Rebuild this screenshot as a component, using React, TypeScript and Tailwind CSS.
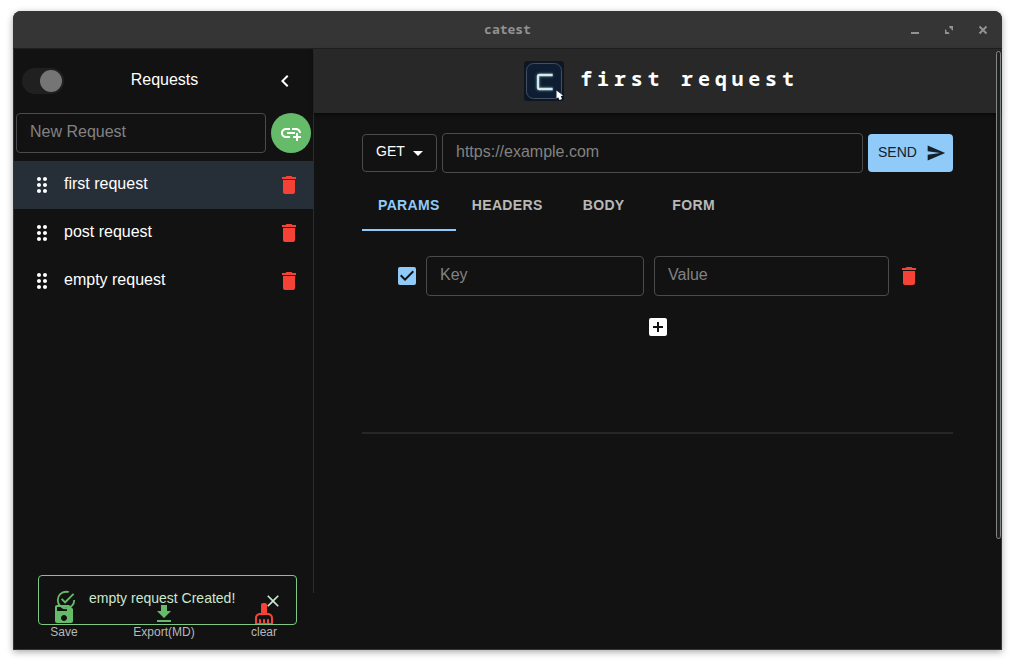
import { useState } from "react";
import {
  MdAddBox,
  MdAddLink,
  MdArrowDropDown,
  MdCheckBox,
  MdCheckBoxOutlineBlank,
  MdChevronLeft,
  MdCleaningServices,
  MdClose,
  MdDelete,
  MdDownload,
  MdDragIndicator,
  MdSave,
  MdSend,
} from "react-icons/md";

const initialRequests = ["first request", "post request", "empty request"];
const tabs = ["PARAMS", "HEADERS", "BODY", "FORM"];

const fieldClass =
  "h-10 min-w-0 rounded border border-[#4b4b4b] bg-transparent px-[13px] pb-0.5 text-base text-white outline-none placeholder:text-[#828282] focus:border-[#90caf9]";

function TitleBar() {
  return (
    <header className="relative flex h-[38px] shrink-0 items-center justify-center border-b border-[#202020] bg-[#353535] text-[#929292]">
      <h1 className="font-['Noto_Sans_Mono','DejaVu_Sans_Mono',monospace] text-[13px] font-bold">catest</h1>
      <div className="absolute right-3 flex gap-5">
        <button type="button" aria-label="Minimize">
          <svg viewBox="0 0 14 14" className="size-3.5" fill="currentColor">
            <path d="M3 9h8v2H3z" />
          </svg>
        </button>
        <button type="button" aria-label="Maximize">
          <svg viewBox="0 0 14 14" className="size-3.5" fill="currentColor">
            <path d="M7 3h4v4.5L9.5 7V5.500H8zM3 6l1.500 1.200V9H6.500L7.500 11H3z" />
          </svg>
        </button>
        <button type="button" aria-label="Close">
          <svg viewBox="0 0 14 14" className="size-3.5" fill="none" stroke="currentColor" strokeWidth="2">
            <path d="M3.5 3.5l7 7M10.5 3.5l-7 7" />
          </svg>
        </button>
      </div>
    </header>
  );
}

function Logo() {
  return (
    <svg viewBox="0 0 40 40" className="size-10" aria-hidden="true">
      <defs>
        <filter id="glow" x="-50%" y="-50%" width="200%" height="200%">
          <feGaussianBlur stdDeviation="1" />
        </filter>
      </defs>
      <rect width="40" height="40" rx="3" fill="#0d1623" />
      <rect x="2.5" y="2.5" width="35" height="35" rx="7" fill="#0f1d33" stroke="#434f63" />
      <path d="M28.700 14H15.500q-1.500 0-1.500 1.500v11q0 1.500 1.500 1.500H28.700" fill="none" stroke="#3f7482" strokeWidth="3.5" filter="url(#glow)" />
      <path d="M28.700 14H15.500q-1.500 0-1.500 1.500v11q0 1.500 1.500 1.500H28.700" fill="none" stroke="#dbe8ea" strokeWidth="2.3" />
      <path d="M32.500 29.500v7.700l1.700-1 1.300 2.800 2.500-1.100-1.200-2.700 2.200-.6z" fill="#fff" />
    </svg>
  );
}

function SuccessIcon() {
  return (
    <svg viewBox="0 0 24 24" className="size-[22px]" fill="currentColor" aria-hidden="true">
      <path d="M20,12A8,8 0 0,1 12,20A8,8 0 0,1 4,12A8,8 0 0,1 12,4C12.76,4 13.5,4.11 14.2,4.31L15.77,2.74C14.61,2.26 13.34,2 12,2A10,10 0 0,0 2,12A10,10 0 0,0 12,22A10,10 0 0,0 22,12M7.91,10.08L6.5,11.5L11,16L21,6L19.59,4.58L11,13.17L7.91,10.08Z" />
    </svg>
  );
}

function Sidebar() {
  const [selected, setSelected] = useState(0);
  const [requests, setRequests] = useState(initialRequests);
  const [toast, setToast] = useState(true);

  return (
    <aside className="relative flex w-[300px] shrink-0 flex-col">
      <div className="flex flex-1 flex-col border-r border-[#2c2c2c]">
        <div className="flex h-16 items-center pr-4 pl-2">
          <input
            type="checkbox"
            role="switch"
            aria-label="Dark theme"
            defaultChecked
            className="flex h-[26px] w-[42px] appearance-none items-center rounded-full bg-[#202020] px-0.5 before:size-[22px] before:rounded-full before:bg-[#757575] checked:justify-end"
          />
          <h2 className="flex-1 pr-2 pb-0.5 text-center text-base">Requests</h2>
          <button type="button" aria-label="Collapse sidebar">
            <MdChevronLeft className="size-6" />
          </button>
        </div>
        <form className="flex items-center gap-[5px] px-0.5" onSubmit={(e) => e.preventDefault()}>
          <input aria-label="New request" placeholder="New Request" className={`${fieldClass} flex-1`} />
          <button type="submit" aria-label="Add request" className="grid size-10 place-items-center rounded-full bg-[#66bb6a]">
            <MdAddLink className="size-6" />
          </button>
        </form>
        <ul className="pt-2">
          {requests.map((name, i) => (
            <li key={name} className={`flex h-12 items-center pr-3 pl-4 ${i === selected ? "bg-[#262e37]" : ""}`}>
              <MdDragIndicator className="size-6" />
              <button type="button" onClick={() => setSelected(i)} className="flex-1 pb-0.5 pl-2.5 text-left text-base">
                {name}
              </button>
              <button type="button" aria-label={`Delete ${name}`} onClick={() => setRequests(requests.filter((r) => r !== name))}>
                <MdDelete className="size-6 text-[#f44336]" />
              </button>
            </li>
          ))}
        </ul>
      </div>
      <nav className="grid h-14 grid-cols-3 text-xs text-[#b8b8b8]">
        <button type="button" className="flex flex-col items-center justify-center">
          <MdSave className="-mb-0.5 size-6 text-[#66bb6a]" />
          Save
        </button>
        <button type="button" className="flex flex-col items-center justify-center">
          <MdDownload className="-mb-0.5 size-6 text-[#66bb6a]" />
          Export(MD)
        </button>
        <button type="button" className="flex flex-col items-center justify-center">
          <MdCleaningServices className="-mb-0.5 size-6 text-[#f44336]" />
          clear
        </button>
      </nav>
      {toast && (
        <div
          role="alert"
          className="absolute bottom-6 left-6 flex h-[50px] w-[259px] items-center rounded border border-[#81c784] pr-[13px] pl-4 text-sm text-[#cce8cd]"
        >
          <span className="text-[#66bb6a]">
            <SuccessIcon />
          </span>
          <span className="flex-1 pb-1 pl-3 whitespace-nowrap">empty request Created!</span>
          <button type="button" aria-label="Dismiss" className="pt-0.5" onClick={() => setToast(false)}>
            <MdClose className="size-5" />
          </button>
        </div>
      )}
    </aside>
  );
}

function Workspace() {
  const [tab, setTab] = useState("PARAMS");

  return (
    <main className="relative min-w-0 flex-1">
      <header className="flex h-16 items-center justify-center gap-4 bg-[#282828] pl-2 shadow-[0_2px_4px_rgba(0,0,0,0.5)]">
        <Logo />
        <h2 className="pb-1 font-['Noto_Sans_Mono','DejaVu_Sans_Mono',monospace] text-xl font-bold tracking-[0.3rem]">
          first request
        </h2>
      </header>
      <div className="px-12 pt-5">
        <form className="flex items-center gap-[5px]" onSubmit={(e) => e.preventDefault()}>
          <div className="relative">
            <select
              aria-label="Method"
              className="h-[38px] w-[75px] appearance-none rounded border border-[#4b4b4b] bg-transparent pb-1 pl-[13px] text-sm text-white"
            >
              <option>GET</option>
              <option>POST</option>
              <option>PUT</option>
              <option>DELETE</option>
            </select>
            <MdArrowDropDown className="pointer-events-none absolute top-[7px] right-[7px] size-6" />
          </div>
          <input aria-label="URL" placeholder="https://example.com" className={`${fieldClass} flex-1`} />
          <button
            type="submit"
            className="flex h-[38px] w-[85px] items-center justify-between rounded bg-[#90caf9] pr-[7px] pl-2.5 text-sm text-[#14202a]"
          >
            <span className="pb-0.5">SEND</span>
            <MdSend className="size-5" />
          </button>
        </form>
        <div role="tablist" className="mt-2 flex">
          {tabs.map((name) => (
            <button
              key={name}
              type="button"
              role="tab"
              aria-selected={tab === name}
              onClick={() => setTab(name)}
              className={`h-[50px] min-w-[90px] border-b-2 px-4 text-sm font-bold tracking-wide ${
                tab === name ? "border-[#90caf9] text-[#90caf9]" : "border-transparent text-[#b8b8b8]"
              }`}
            >
              {name}
            </button>
          ))}
        </div>
        <div className="flex h-[203px] flex-col items-center border-b-2 border-[#262626] pt-[25px]">
          <div className="flex w-full items-center pr-8 pl-[33px]">
            <span className="relative mr-[7px] size-6 shrink-0 text-[#90caf9]">
              <input type="checkbox" aria-label="Enabled" defaultChecked className="peer absolute inset-0 size-6 appearance-none" />
              <MdCheckBox className="pointer-events-none hidden size-6 peer-checked:block" />
              <MdCheckBoxOutlineBlank className="pointer-events-none size-6 peer-checked:hidden" />
            </span>
            <input aria-label="Key" placeholder="Key" className={`${fieldClass} mr-2.5 flex-[190]`} />
            <input aria-label="Value" placeholder="Value" className={`${fieldClass} mr-2 flex-[207]`} />
            <button type="button" aria-label="Delete parameter">
              <MdDelete className="size-6 text-[#f44336]" />
            </button>
          </div>
          <button type="button" aria-label="Add parameter" className="mt-[19px]">
            <MdAddBox className="size-6" />
          </button>
        </div>
      </div>
      <div className="absolute top-0.5 right-0 bottom-[110px] w-[5px] rounded-sm border border-[#858585] bg-[#1c2222]" />
    </main>
  );
}

export default function App() {
  return (
    <div className="flex h-screen min-h-[560px] flex-col bg-white px-[13px] pt-[11px] pb-4 font-['Liberation_Sans',Arial,sans-serif] text-white">
      <div className="flex min-h-0 flex-1 flex-col overflow-hidden rounded-t-lg bg-[#353535] shadow-[0_2px_7px_rgba(0,0,0,0.35)]">
        <TitleBar />
        <div className="flex min-h-0 flex-1 border-x border-b border-[#343434] bg-[#121212]">
          <Sidebar />
          <Workspace />
        </div>
      </div>
    </div>
  );
}
